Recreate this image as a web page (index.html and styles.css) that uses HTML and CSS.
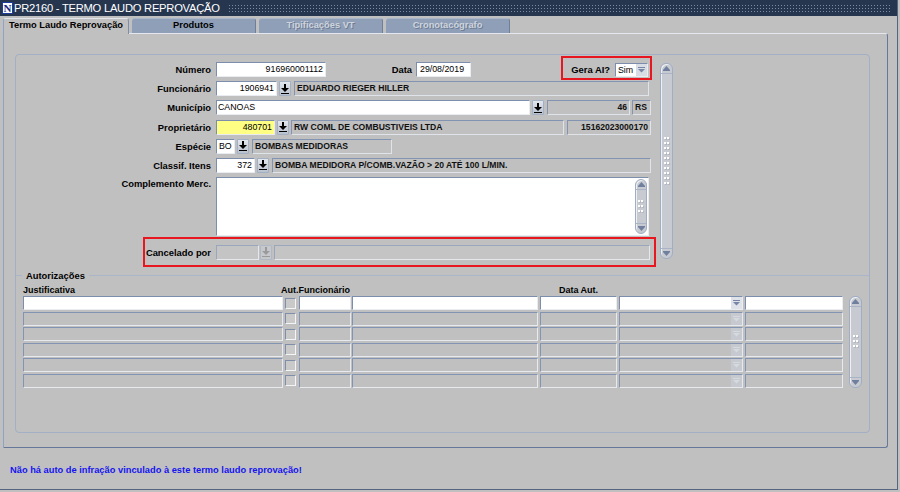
FILE: index.html
```html
<!DOCTYPE html>
<html lang="pt-BR">
<head>
<meta charset="utf-8">
<title>PR2160 - TERMO LAUDO REPROVAÇÃO</title>
<link rel="stylesheet" href="styles.css">
</head>
<body>
<div class="window">
  <div class="titlebar">
    <span class="app-icon">N</span>
    <span class="title">PR2160 - TERMO LAUDO REPROVAÇÃO</span>
    <span class="title-grip"></span>
  </div>

  <div class="tabs">
    <div class="tab active">Termo Laudo Reprovação</div>
    <div class="tab">Produtos</div>
    <div class="tab disabled">Tipificações VT</div>
    <div class="tab disabled">Cronotacógrafo</div>
  </div>

  <div class="panel">
    <div class="frame">
      <div class="form-area">
        <div class="form-rows">
          <div class="row">
            <span class="lbl">Número</span>
            <div class="f w r fld-numero">916960001112</div>
            <span class="lbl lbl-data">Data</span>
            <div class="f w fld-data">29/08/2019</div>
            <span class="lbl lbl-gera">Gera AI?</span>
            <div class="select fld-gera">
              <span class="val">Sim</span>
              <span class="arr"><svg viewBox="0 0 7 6" width="7" height="6"><rect x="0" y="0" width="7" height="1"/><polygon points="0,2 7,2 3.5,5.5"/></svg></span>
            </div>
          </div>

          <div class="row">
            <span class="lbl">Funcionário</span>
            <div class="f w r fld-func">1906941</div>
            <span class="lov lov-func"><svg viewBox="0 0 8 10" width="8" height="10"><rect x="3" y="0" width="2" height="4"/><polygon points="0,4 8,4 4,8"/><rect x="0" y="9" width="8" height="1"/></svg></span>
            <div class="f d fld-func-nome">EDUARDO RIEGER HILLER</div>
          </div>

          <div class="row">
            <span class="lbl">Município</span>
            <div class="f w fld-mun">CANOAS</div>
            <span class="lov lov-mun"><svg viewBox="0 0 8 10" width="8" height="10"><rect x="3" y="0" width="2" height="4"/><polygon points="0,4 8,4 4,8"/><rect x="0" y="9" width="8" height="1"/></svg></span>
            <div class="f d r fld-mun-cod">46</div>
            <div class="f d fld-uf">RS</div>
          </div>

          <div class="row">
            <span class="lbl">Proprietário</span>
            <div class="f y r fld-prop">480701</div>
            <span class="lov lov-prop"><svg viewBox="0 0 8 10" width="8" height="10"><rect x="3" y="0" width="2" height="4"/><polygon points="0,4 8,4 4,8"/><rect x="0" y="9" width="8" height="1"/></svg></span>
            <div class="f d fld-prop-nome">RW COML DE COMBUSTIVEIS LTDA</div>
            <div class="f d r fld-cnpj">15162023000170</div>
          </div>

          <div class="row">
            <span class="lbl">Espécie</span>
            <div class="f w fld-esp">BO</div>
            <span class="lov lov-esp"><svg viewBox="0 0 8 10" width="8" height="10"><rect x="3" y="0" width="2" height="4"/><polygon points="0,4 8,4 4,8"/><rect x="0" y="9" width="8" height="1"/></svg></span>
            <div class="f d fld-esp-nome">BOMBAS MEDIDORAS</div>
          </div>

          <div class="row">
            <span class="lbl">Classif. Itens</span>
            <div class="f w r fld-class">372</div>
            <span class="lov lov-class"><svg viewBox="0 0 8 10" width="8" height="10"><rect x="3" y="0" width="2" height="4"/><polygon points="0,4 8,4 4,8"/><rect x="0" y="9" width="8" height="1"/></svg></span>
            <div class="f d fld-class-nome">BOMBA MEDIDORA P/COMB.VAZÃO &gt; 20 ATÉ 100 L/MIN.</div>
          </div>

          <div class="row row-text">
            <span class="lbl">Complemento Merc.</span>
            <div class="textarea">
              <div class="vscroll text-scroll">
                <span class="sb-btn sb-up"><svg viewBox="0 0 7 5" width="7" height="5"><polygon points="0,4 7,4 3.5,0"/><rect x="0" y="4" width="7" height="1"/></svg></span>
                <span class="sb-track"><span class="grip grip-small"></span></span>
                <span class="sb-btn sb-down"><svg viewBox="0 0 7 5" width="7" height="5"><rect x="0" y="0" width="7" height="1"/><polygon points="0,1 7,1 3.5,5"/></svg></span>
              </div>
            </div>
          </div>

          <div class="row row-cancel">
            <span class="lbl">Cancelado por</span>
            <div class="f dis fld-canc"></div>
            <span class="lov lov-canc disabled"><svg viewBox="0 0 8 10" width="8" height="10"><rect x="3" y="0" width="2" height="4"/><polygon points="0,4 8,4 4,8"/><rect x="0" y="9" width="8" height="1"/></svg></span>
            <div class="f dis fld-canc-nome"></div>
          </div>
        </div>

        <div class="vscroll form-scroll">
          <span class="sb-btn sb-up"><svg viewBox="0 0 7 5" width="7" height="5"><polygon points="0,4 7,4 3.5,0"/><rect x="0" y="4" width="7" height="1"/></svg></span>
          <span class="sb-track"><span class="grip grip-tall"></span></span>
          <span class="sb-btn sb-down"><svg viewBox="0 0 7 5" width="7" height="5"><rect x="0" y="0" width="7" height="1"/><polygon points="0,1 7,1 3.5,5"/></svg></span>
        </div>
      </div>

      <div class="section-title"><span>Autorizações</span></div>

      <div class="grid-area">
        <div class="grid">
          <div class="grid-head">
            <span class="h-just">Justificativa</span>
            <span class="h-aut">Aut.Funcionário</span>
            <span class="h-data">Data Aut.</span>
          </div>
          <div class="grid-rows">
            <div class="grow first">
              <div class="f c-just"></div><span class="chk"></span><div class="f c-aut"></div><div class="f c-nome"></div><div class="f c-data"></div>
              <div class="gsel c-sel"><span class="arr"><svg viewBox="0 0 7 6" width="7" height="6"><rect x="0" y="0" width="7" height="1"/><polygon points="0,2 7,2 3.5,5.5"/></svg></span></div>
              <div class="f c-last"></div>
            </div>
            <div class="grow">
              <div class="f c-just"></div><span class="chk"></span><div class="f c-aut"></div><div class="f c-nome"></div><div class="f c-data"></div>
              <div class="gsel c-sel"><span class="arr"><svg viewBox="0 0 7 6" width="7" height="6"><rect x="0" y="0" width="7" height="1"/><polygon points="0,2 7,2 3.5,5.5"/></svg></span></div>
              <div class="f c-last"></div>
            </div>
            <div class="grow">
              <div class="f c-just"></div><span class="chk"></span><div class="f c-aut"></div><div class="f c-nome"></div><div class="f c-data"></div>
              <div class="gsel c-sel"><span class="arr"><svg viewBox="0 0 7 6" width="7" height="6"><rect x="0" y="0" width="7" height="1"/><polygon points="0,2 7,2 3.5,5.5"/></svg></span></div>
              <div class="f c-last"></div>
            </div>
            <div class="grow">
              <div class="f c-just"></div><span class="chk"></span><div class="f c-aut"></div><div class="f c-nome"></div><div class="f c-data"></div>
              <div class="gsel c-sel"><span class="arr"><svg viewBox="0 0 7 6" width="7" height="6"><rect x="0" y="0" width="7" height="1"/><polygon points="0,2 7,2 3.5,5.5"/></svg></span></div>
              <div class="f c-last"></div>
            </div>
            <div class="grow">
              <div class="f c-just"></div><span class="chk"></span><div class="f c-aut"></div><div class="f c-nome"></div><div class="f c-data"></div>
              <div class="gsel c-sel"><span class="arr"><svg viewBox="0 0 7 6" width="7" height="6"><rect x="0" y="0" width="7" height="1"/><polygon points="0,2 7,2 3.5,5.5"/></svg></span></div>
              <div class="f c-last"></div>
            </div>
            <div class="grow">
              <div class="f c-just"></div><span class="chk"></span><div class="f c-aut"></div><div class="f c-nome"></div><div class="f c-data"></div>
              <div class="gsel c-sel"><span class="arr"><svg viewBox="0 0 7 6" width="7" height="6"><rect x="0" y="0" width="7" height="1"/><polygon points="0,2 7,2 3.5,5.5"/></svg></span></div>
              <div class="f c-last"></div>
            </div>
          </div>
        </div>
        <div class="vscroll grid-scroll">
          <span class="sb-btn sb-up"><svg viewBox="0 0 7 5" width="7" height="5"><polygon points="0,4 7,4 3.5,0"/><rect x="0" y="4" width="7" height="1"/></svg></span>
          <span class="sb-track"><span class="grip grip-small"></span></span>
          <span class="sb-btn sb-down"><svg viewBox="0 0 7 5" width="7" height="5"><rect x="0" y="0" width="7" height="1"/><polygon points="0,1 7,1 3.5,5"/></svg></span>
        </div>
      </div>
    </div>
  </div>

  <div class="status">Não há auto de infração vinculado à este termo laudo reprovação!</div>

  <div class="hl hl-gera"></div>
  <div class="hl hl-cancel"></div>
</div>
</body>
</html>
```

FILE: styles.css
```css
* { box-sizing: border-box; }
html, body { margin: 0; padding: 0; }
body {
  width: 900px;
  height: 492px;
  overflow: hidden;
  background: #c0c0c0;
  font-family: "Liberation Sans", Arial, sans-serif;
  color: #000;
}

.window {
  position: relative;
  width: 898px;
  height: 490px;
  border-right: 1px solid #55657f;
  border-bottom: 1px solid #55657f;
}

/* ---------- title bar ---------- */
.titlebar {
  height: 16px;
  background: #26364f;
  display: flex;
  align-items: center;
  padding-left: 2px;
}
.app-icon {
  width: 11px;
  height: 12px;
  background: #fff;
  border: 1px solid #1f3b9e;
  color: #17298a;
  font: bold 11px/10px "Liberation Serif", serif;
  text-align: center;
  flex: none;
}
.title {
  color: #fff;
  font-size: 11.2px;
  letter-spacing: -0.25px;
  line-height: 14px;
  margin-left: 1px;
  white-space: nowrap;
}
.title-grip {
  flex: 1;
  height: 9px;
  margin: 0 6px 0 8px;
  background-image: radial-gradient(circle, #7b8ba4 0.65px, transparent 0.95px);
  background-size: 3px 3px;
}

/* ---------- tabs ---------- */
.tabs {
  display: flex;
  align-items: flex-end;
  gap: 3px;
  height: 17px;
  padding-left: 3px;
}
.tab {
  width: 124px;
  height: 15px;
  background: #8f9fb7;
  border-radius: 3px 3px 0 0;
  border-right: 1px solid #6f7f99;
  border-top: 1px solid #a9b6ca;
  font-size: 9.3px;
  font-weight: bold;
  line-height: 13px;
  text-align: center;
  white-space: nowrap;
}
.tab.active {
  width: 126px;
  height: 16px;
  margin-bottom: -1px;
  position: relative;
  z-index: 1;
  background: #c0c0c0;
  border-left: 1px solid #8fa3c6;
  border-top: 1px solid #e2e6ec;
  border-right: 1px solid #7d8dab;
  text-align: left;
  padding-left: 5px;
}
.tab.disabled {
  color: #cfd4dc;
  text-shadow: 1px 1px 0 #6c7c96;
}

/* ---------- tab panel ---------- */
.panel {
  margin-left: 3px;
  width: 885px;
  height: 415px;
  border: 1px solid;
  border-color: #e4e8ee #67779a #67779a #8fa2c2;
  border-radius: 0 3px 3px 0;
  padding: 20px 0 0 11px;
}
.frame {
  width: 855px;
  height: 379px;
  border: 1px solid #a3afc5;
  border-radius: 4px;
}

/* ---------- form ---------- */
.form-area {
  display: flex;
  height: 214px;
  padding-top: 7px;
}
.form-rows {
  width: 639px;
  display: flex;
  flex-direction: column;
  gap: 4.2px;
}
.row {
  display: flex;
  align-items: center;
  height: 15px;
}
.lbl {
  width: 195px;
  margin-right: 5px;
  text-align: right;
  font-size: 9.4px;
  font-weight: bold;
  white-space: nowrap;
  flex: none;
}
.lbl-data { width: 86px; margin-right: 4px; }
.lbl-gera { width: 139px; margin-right: 5px; }

.f {
  height: 15px;
  border: 1px solid;
  border-color: #7d8dac #e9ecf1 #e9ecf1 #7d8dac;
  font-size: 8.8px;
  line-height: 13px;
  padding: 0 2px;
  white-space: nowrap;
  overflow: hidden;
  flex: none;
}
.f.w { background: #fff; }
.f.y { background: #ffff84; }
.f.d {
  background: #c0c0c0;
  font-weight: bold;
  font-size: 8.6px;
  color: #111;
  border-color: #8393b2 #dfe3ea #dfe3ea #8393b2;
}
.f.dis {
  background: #c4c4c4;
  border-color: #9aa6bc #e4e7ec #e4e7ec #9aa6bc;
}
.f.r { text-align: right; }

.fld-numero { width: 110px; }
.fld-data { width: 55px; padding-left: 3px; }
.fld-func { width: 61px; }
.fld-func-nome { width: 355px; margin-left: 3px; }
.fld-mun { width: 314px; padding-left: 1px; }
.fld-mun-cod { width: 83px; margin-left: 3px; }
.fld-uf { width: 19px; margin-left: 2px; padding-left: 2px; }
.fld-prop { width: 59px; }
.fld-prop-nome { width: 273px; margin-left: 2px; }
.fld-cnpj { width: 84px; margin-left: 3px; }
.fld-esp { width: 19px; }
.fld-esp-nome { width: 140px; margin-left: 3px; }
.fld-class { width: 39px; }
.fld-class-nome { width: 379px; margin-left: 3px; }
.fld-canc { width: 43px; }
.fld-canc-nome { width: 376px; margin-left: 2px; }

/* list-of-values button */
.lov {
  width: 12px;
  height: 15px;
  margin-left: 2px;
  flex: none;
  display: flex;
  align-items: center;
  justify-content: center;
  background: linear-gradient(#e3e7ee, #b8c1cf);
  border: 1px solid #a3afc3;
  border-radius: 1px;
}
.lov svg { fill: #000; }
.lov.disabled { background: #c6c8cc; border-color: #b0b8c6; }
.lov.disabled svg { fill: #9a9a9a; }
.lov-canc { margin-left: 1px; }

/* select */
.select {
  width: 33px;
  height: 14px;
  display: flex;
  background: #fff;
  border: 1px solid;
  border-color: #7d8dac #e9ecf1 #e9ecf1 #7d8dac;
  flex: none;
}
.select .val {
  flex: 1;
  font-size: 8.8px;
  line-height: 12px;
  padding-left: 2px;
}
.arr {
  width: 11px;
  display: flex;
  align-items: center;
  justify-content: center;
  background: #d8dde5;
}
.arr svg { fill: #7786a4; }

/* textarea */
.row-text { height: 59px; align-items: flex-start; }
.row-text .lbl { line-height: 13px; }
.textarea {
  width: 433px;
  height: 59px;
  background: #fff;
  border: 1px solid;
  border-color: #7d8dac #e9ecf1 #e9ecf1 #7d8dac;
  display: flex;
  justify-content: flex-end;
  padding: 1px 1px 1px 0;
}
.row-cancel { margin-top: 4.6px; }

/* scrollbars */
.vscroll {
  width: 13px;
  display: flex;
  flex-direction: column;
  border: 1px solid #a0adc3;
  border-radius: 6px;
  background: #c7cad0;
  box-shadow: inset 1px 1px 0 #eef0f4;
  flex: none;
}
.sb-btn {
  height: 10px;
  display: flex;
  align-items: center;
  justify-content: center;
  flex: none;
}
.sb-btn svg { fill: #6f7f9d; }
.sb-up { border-bottom: 1px solid #a9b4c7; }
.sb-down { border-top: 1px solid #a9b4c7; }
.sb-track {
  flex: 1;
  display: flex;
  align-items: center;
  justify-content: center;
}
.grip {
  width: 6px;
  background-image:
    radial-gradient(circle at 1px 1px, #ffffff 0.8px, transparent 1.1px),
    radial-gradient(circle at 2px 2px, #a7afbd 0.6px, transparent 0.9px);
  background-size: 3px 5px;
}
.grip-tall { height: 48px; }
.grip-small { height: 14px; }

.form-scroll { height: 196px; margin: 1px 0 0 5px; }
.text-scroll { width: 12px; height: 55px; }

/* ---------- section title ---------- */
.section-title {
  display: flex;
  align-items: center;
  height: 12px;
  font-size: 9.4px;
  font-weight: bold;
}
.section-title::before {
  content: "";
  width: 6px;
  border-top: 1px solid #aab5c9;
}
.section-title::after {
  content: "";
  flex: 1;
  border-top: 1px solid #aab5c9;
}
.section-title span { padding: 0 4px; }

/* ---------- grid ---------- */
.grid-area {
  display: flex;
  margin-top: 4px;
  padding-left: 7px;
}
.grid { width: 820px; }
.grid-head {
  display: flex;
  height: 11px;
  font-size: 9px;
  font-weight: bold;
  line-height: 10px;
  white-space: nowrap;
}
.h-just { width: 258px; }
.h-aut { width: 259px; }
.h-data { width: 77px; text-align: center; }

.grid-rows {
  display: flex;
  flex-direction: column;
  gap: 1.5px;
}
.grow {
  display: flex;
  align-items: center;
  height: 14px;
}
.grow .f {
  height: 14px;
  background: #c0c0c0;
  border-color: #8393b2 #e6e9ee #e6e9ee #8393b2;
}
.grow.first .f { background: #fff; border-color: #7d8dac #e9ecf1 #e9ecf1 #7d8dac; }
.c-just { width: 260px; }
.chk {
  width: 11px;
  height: 11px;
  margin: 0 3px 0 2px;
  border: 1px solid;
  border-color: #7f8fab #f4f5f7 #f4f5f7 #7f8fab;
  background: #c9c9c9;
  flex: none;
}
.c-aut { width: 52px; }
.c-nome { width: 186px; margin-left: 1px; }
.c-data { width: 77px; margin-left: 2px; }
.c-sel { width: 124px; margin-left: 2px; }
.c-last { width: 98px; margin-left: 2px; }

.gsel {
  height: 14px;
  display: flex;
  justify-content: flex-end;
  background: #c0c0c0;
  border: 1px solid;
  border-color: #8393b2 #e6e9ee #e6e9ee #8393b2;
  flex: none;
}
.gsel .arr { background: #c6c9cf; }
.gsel .arr svg { fill: #d6d9de; }
.grow.first .gsel { background: #fff; border-color: #7d8dac #e9ecf1 #e9ecf1 #7d8dac; }
.grow.first .gsel .arr { background: #dfe2e8; }
.grow.first .gsel .arr svg { fill: #7786a4; }

.grid-scroll { height: 92px; margin: 11px 0 0 6px; }

/* ---------- status ---------- */
.status {
  margin-top: 16px;
  padding-left: 10px;
  font-size: 9.3px;
  font-weight: bold;
  line-height: 12px;
  color: #1515ee;
  white-space: nowrap;
}

/* ---------- highlight overlays ---------- */
.hl {
  position: absolute;
  border: 2px solid #e8161e;
  pointer-events: none;
}
.hl-gera { left: 561px; top: 56px; width: 91px; height: 24px; }
.hl-cancel { left: 143px; top: 237px; width: 513px; height: 30px; }
```
